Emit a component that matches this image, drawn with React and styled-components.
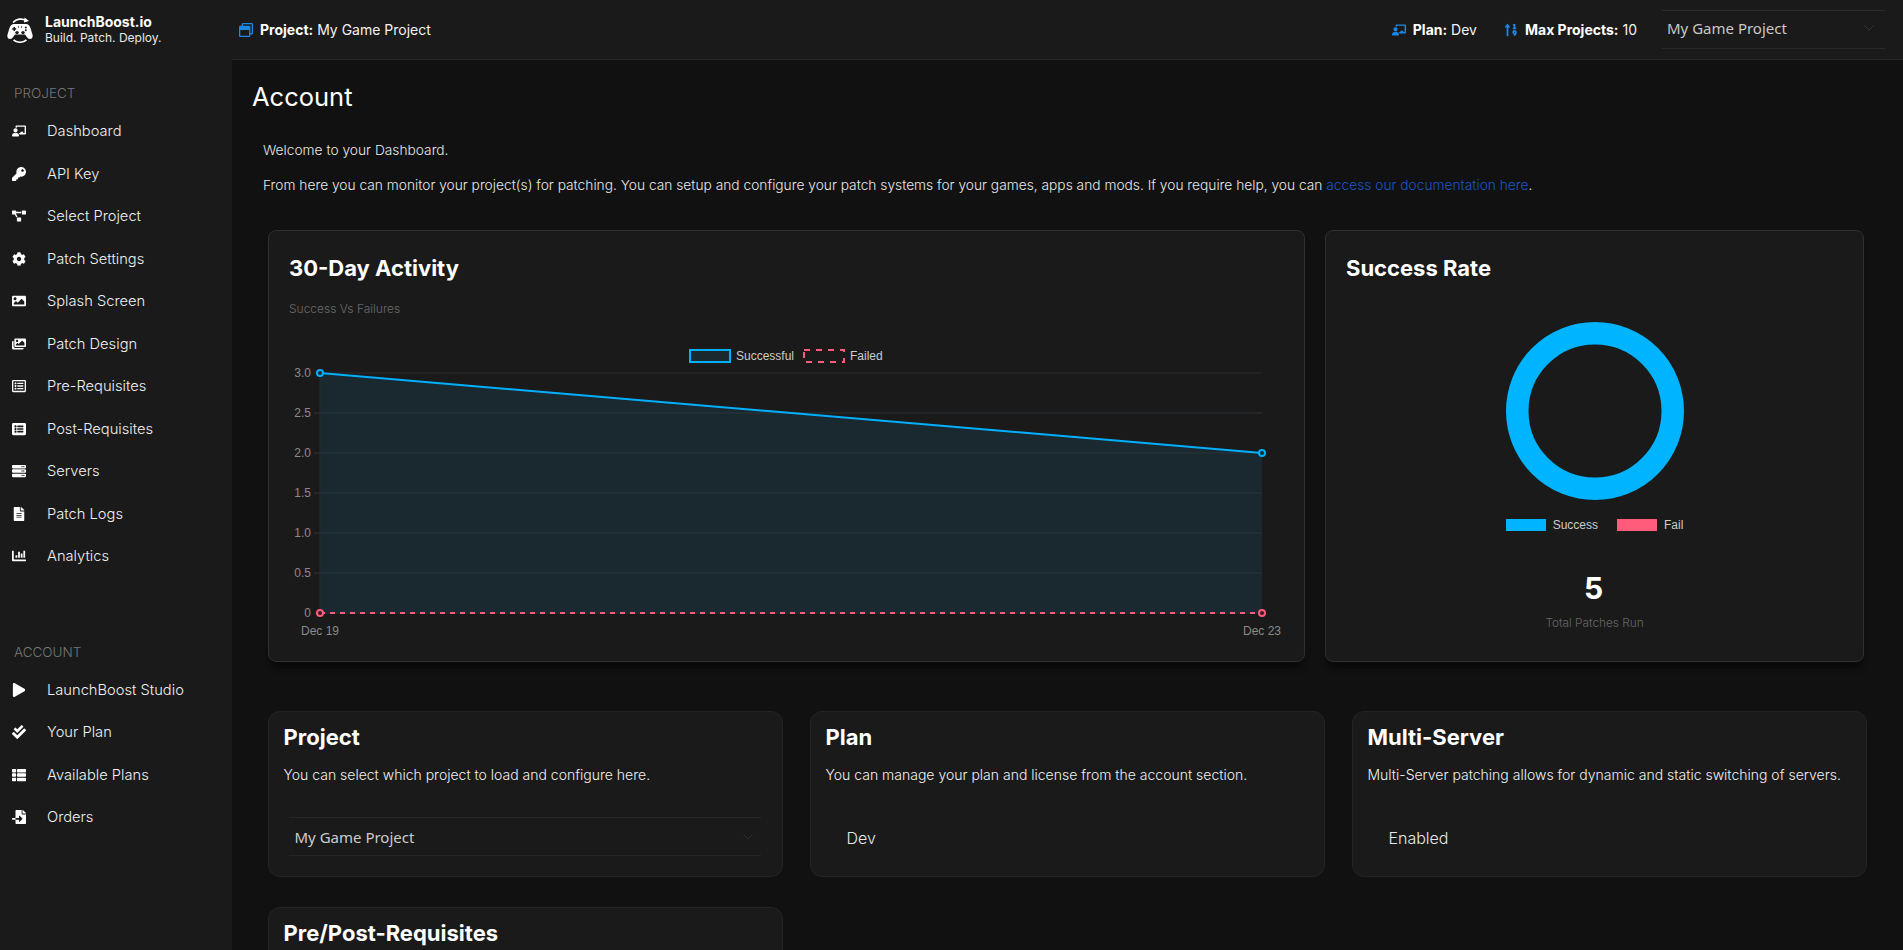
import React from "react";
import styled, { createGlobalStyle } from "styled-components";
import {
  FaChalkboardTeacher, FaKey, FaProjectDiagram, FaCog, FaImage, FaImages, FaListAlt, FaServer,
  FaFileAlt, FaChartBar, FaPlay, FaCheckDouble, FaThList, FaFileImport, FaSortNumericUp, FaRegWindowRestore, FaRegListAlt,
} from "react-icons/fa";

const Global = createGlobalStyle`
  html, body { margin: 0; padding: 0; background: #111; height: 100%; overflow: hidden; }
  * { box-sizing: border-box; }
  body { font-family: Inter, "Liberation Sans", sans-serif; color: #fff; }
`;

const Shell = styled.div`
  display: grid;
  grid-template-columns: 232px 1fr;
  grid-template-rows: 60px 1fr;
  height: 950px;
  overflow: hidden;
`;
const Brand = styled.div`
  background: #1a1a1a;
  display: flex;
  align-items: center;
  gap: 12px;
  padding: 0 0 0 7px;
`;
const BrandText = styled.div`
  display: flex;
  flex-direction: column;
  font-size: 12px;
  line-height: 16px;
  b { font-weight: 700; font-size: 14px; }
  span { color: #e8e8e8; font-weight: 400; }
`;
const Top = styled.header`
  background: #1a1a1a;
  border-bottom: 1px solid #2a2a2a;
  display: flex;
  align-items: center;
  padding: 0 18px 0 7px;
  font-size: 14px;
`;
const TopItem = styled.div`
  display: flex;
  align-items: center;
  gap: 7px;
  margin-left: ${(p) => p.$gap || 0}px;
  color: #f2f2f2;
  font-weight: 400;
  svg { color: #1b87e6; font-size: 14px; }
  b { font-weight: 700; color: #fff; }
`;
const Spacer = styled.div` flex: 1; `;
const TopSelect = styled.div`
  width: 223px;
  height: 39px;
  margin-left: 25px;
  border-top: 1px solid #2a2a2a;
  border-bottom: 1px solid #2a2a2a;
  display: flex;
  align-items: center;
  justify-content: space-between;
  padding: 0 11px 3px 5px;
  font-family: "Noto Sans", sans-serif;
  font-size: 15px;
  color: #c8c8c8;
`;
const Side = styled.aside`
  background: #1a1a1a;
  padding: 23px 0 0 0;
  display: flex;
  flex-direction: column;
`;
const SideHead = styled.div`
  font-size: 13.5px;
  font-weight: 300;
  color: #757575;
  padding-left: 14px;
  line-height: 20px;
  margin-top: ${(p) => p.$top || 0}px;
  margin-bottom: 7px;
`;
const SideItem = styled.div`
  height: 42.5px;
  display: flex;
  align-items: center;
  padding-left: 12px;
  font-size: 14.7px;
  font-weight: 300;
  color: #f0f0f0;
`;
const SideIcon = styled.span`
  width: 35px;
  display: flex;
  svg { font-size: 14px; color: #fff; }
`;
const Main = styled.main`
  background: #111;
  padding: 0 37px 0 21px;
  overflow: hidden;
`;
const PageTitle = styled.h1`
  margin: 22px 0 0 -1px;
  font-size: 25.5px;
  line-height: 30px;
  font-weight: 400;
`;
const Intro = styled.div`
  padding: 29px 0 0 10px;
  font-size: 13.76px;
  font-weight: 300;
  color: #e8e8e8;
  p { margin: 0 0 17px; line-height: 18px; }
  a { color: #1a56c4; }
`;
const TopRow = styled.div`
  display: grid;
  grid-template-columns: 1037px 539px;
  gap: 20px;
  margin: 36px 0 0 15px;
`;
const Card = styled.section`
  background: #1a1a1a;
  border: 1px solid #303030;
  border-radius: 8px;
  height: 432px;
  box-shadow: 0 8px 6px -3px #090909;
  padding: 22px 20px 0;
  position: relative;
`;
const CardTitle = styled.h2`
  margin: 0;
  font-size: 22px;
  line-height: 30px;
  font-weight: 700;
`;
const CardSub = styled.div`
  font-size: 12px;
  font-weight: 300;
  color: #6a6a6a;
  margin-top: 18px;
`;
const ChartWrap = styled.div`
  margin: 24px -20px 0 -20px;
  svg { display: block; }
  text { font-family: "Liberation Sans", Arial, sans-serif; font-size: 12px; }
`;
const DonutWrap = styled.div`
  display: flex;
  justify-content: center;
  margin-top: 38px;
`;
const Legend = styled.div`
  display: flex;
  justify-content: center;
  gap: 19px;
  margin-top: 17px;
  line-height: 14px;
  font-family: "Liberation Sans", Arial, sans-serif;
  font-size: 12px;
  color: #ccc;
`;
const LegendItem = styled.div`
  display: flex;
  align-items: center;
  gap: 7px;
  &::before {
    content: "";
    width: 40px;
    height: 12px;
    background: ${(p) => p.$color};
  }
`;
const Total = styled.div`
  text-align: center;
  font-size: 30px;
  font-weight: 700;
  margin-top: 38px;
  margin-right: 2px;
  line-height: 36px;
`;
const TotalSub = styled.div`
  text-align: center;
  font-size: 11.8px;
  line-height: 15px;
  font-weight: 300;
  color: #666;
  margin-top: 10px;
`;
const InfoGrid = styled.div`
  display: grid;
  grid-template-columns: repeat(3, 515px);
  gap: 30px 27px;
  margin: 49px 0 0 15px;
`;
const InfoCard = styled.section`
  background: #1a1a1a;
  border: 1px solid #242424;
  border-radius: 12px;
  height: 166px;
  padding: 10px 14.5px 0;
`;
const InfoTitle = styled.h3`
  margin: 0;
  font-size: 22px;
  line-height: 30px;
  font-weight: 700;
`;
const InfoText = styled.p`
  margin: 14px 0 0;
  font-size: 14px;
  line-height: 18px;
  font-weight: 300;
  color: #f0f0f0;
`;
const CardSelect = styled.div`
  margin: 33px 7px 0 5px;
  height: 39px;
  border-top: 1px solid #262626;
  border-bottom: 1px solid #262626;
  display: flex;
  align-items: center;
  justify-content: space-between;
  padding: 0 8px 0 6px;
  font-family: "Noto Sans", sans-serif;
  font-size: 15px;
  color: #ccc;
`;
const CardValue = styled.div`
  margin: 44px 0 0 21px;
  font-size: 16px;
  font-weight: 300;
  color: #e8e8e8;
`;

const projectItems = [
  [FaChalkboardTeacher, "Dashboard"], [FaKey, "API Key"], [FaProjectDiagram, "Select Project"],
  [FaCog, "Patch Settings"], [FaImage, "Splash Screen"], [FaImages, "Patch Design"],
  [FaRegListAlt, "Pre-Requisites"], [FaListAlt, "Post-Requisites"], [FaServer, "Servers"],
  [FaFileAlt, "Patch Logs"], [FaChartBar, "Analytics"],
];
const accountItems = [
  [FaPlay, "LaunchBoost Studio"], [FaCheckDouble, "Your Plan"], [FaThList, "Available Plans"], [FaFileImport, "Orders"],
];

function Logo() {
  return (
    <svg width="26" height="26" viewBox="0 0 26 26" fill="none">
      <path d="M6 5.5 A10.5 10.5 0 0 1 19 3.5" stroke="#fff" strokeWidth="1.8" />
      <path d="M17.5 0.5 L22 4 L17 5.5 Z" fill="#fff" />
      <path d="M6.5 23 A11 11 0 0 0 19.5 23" stroke="#fff" strokeWidth="1.8" />
      <path d="M7 7 H19 Q22 7 23.5 11 L25.6 18 Q26 22 23 22 Q21 22 19.5 19.5 L18 17.5 H8 L6.5 19.5 Q5 22 3 22 Q0 22 0.4 18 L2.5 11 Q4 7 7 7 Z" fill="#fff" />
      <path d="M6.5 10 H8 V11.2 H9.2 V12.7 H8 V14 H6.5 V12.7 H5.2 V11.2 H6.5 Z" fill="#1a1a1a" />
      <circle cx="18.8" cy="10.5" r="1" fill="#1a1a1a" />
      <circle cx="18.8" cy="13.3" r="1" fill="#1a1a1a" />
      <circle cx="10" cy="15.6" r="1.7" fill="#1a1a1a" />
      <circle cx="16" cy="15.6" r="1.7" fill="#1a1a1a" />
      <circle cx="11.5" cy="10" r="0.7" fill="#1a1a1a" />
      <circle cx="14.5" cy="10" r="0.7" fill="#1a1a1a" />
    </svg>
  );
}

function Chevron({ color }) {
  return (
    <svg width="10" height="6" viewBox="0 0 10 6" fill="none"><path d="M0.5 0.5 L5 5 L9.5 0.5" stroke={color} /></svg>
  );
}

function ActivityChart() {
  const ox = 51;
  const w = 942;
  const y = (v) => 33 + (3 - v) * 80;
  const ticks = [3, 2.5, 2, 1.5, 1, 0.5, 0];
  return (
    <svg width="1035" height="300" viewBox="0 0 1035 300">
      <path d={`M${ox} ${y(3)} L${ox + w} ${y(2)} V${y(0)} H${ox} Z`} fill="#1a2830" />
      {ticks.map((t) => (
        <g key={t}>
          <line x1={ox - 6} x2={ox + w} y1={y(t)} y2={y(t)} stroke={t === 3 ? "#2a2a2a" : "#2a3338"} />
          <text x={ox - 9} y={y(t) + 4} textAnchor="end" fill="#8a8a8a">{t === 0 ? "0" : t.toFixed(1)}</text>
        </g>
      ))}
      <line x1={ox} x2={ox} y1={y(3)} y2={y(0)} stroke="#2a2a2a" />
      <line x1={ox} y1={y(3)} x2={ox + w} y2={y(2)} stroke="#00b0ff" strokeWidth="2" />
      <line x1={ox} y1={y(0)} x2={ox + w} y2={y(0)} stroke="#ff5c7c" strokeWidth="2" strokeDasharray="5 5" />
      <circle cx={ox} cy={y(3)} r="3" fill="#1a2830" stroke="#00b0ff" strokeWidth="2" />
      <circle cx={ox + w} cy={y(2)} r="3" fill="#1a2830" stroke="#00b0ff" strokeWidth="2" />
      <circle cx={ox} cy={y(0)} r="3" fill="#331a22" stroke="#ff5c7c" strokeWidth="2" />
      <circle cx={ox + w} cy={y(0)} r="3" fill="#331a22" stroke="#ff5c7c" strokeWidth="2" />
      <text x={ox} y={y(0) + 22} textAnchor="middle" fill="#8a8a8a">Dec 19</text>
      <text x={ox + w} y={y(0) + 22} textAnchor="middle" fill="#8a8a8a">Dec 23</text>
      <rect x="421" y="10" width="40" height="12" fill="#1a2830" stroke="#00b0ff" strokeWidth="2" />
      <text x="467" y="20" fill="#ccc">Successful</text>
      <rect x="535" y="10" width="40" height="12" fill="none" stroke="#ff5c7c" strokeWidth="2" strokeDasharray="6 6" />
      <text x="581" y="20" fill="#ccc">Failed</text>
    </svg>
  );
}

function Donut() {
  return (
    <svg width="180" height="180" viewBox="0 0 180 180">
      <circle cx="90" cy="90" r="77.75" fill="none" stroke="#00b4ff" strokeWidth="22.5" />
    </svg>
  );
}

export default function App() {
  return (
    <>
      <Global />
      <Shell>
        <Brand>
          <Logo />
          <BrandText>
            <b>LaunchBoost.io</b>
            <span>Build. Patch. Deploy.</span>
          </BrandText>
        </Brand>
        <Top>
          <TopItem><FaRegWindowRestore /><span><b>Project:</b> My Game Project</span></TopItem>
          <Spacer />
          <TopItem><FaChalkboardTeacher /><span><b>Plan:</b> Dev</span></TopItem>
          <TopItem $gap={27}><FaSortNumericUp /><span><b>Max Projects:</b> 10</span></TopItem>
          <TopSelect>My Game Project<Chevron color="#333" /></TopSelect>
        </Top>
        <Side>
          <SideHead>PROJECT</SideHead>
          {projectItems.map(([I, t]) => (
            <SideItem key={t}><SideIcon><I /></SideIcon>{t}</SideItem>
          ))}
          <SideHead $top={64}>ACCOUNT</SideHead>
          {accountItems.map(([I, t]) => (
            <SideItem key={t}><SideIcon><I /></SideIcon>{t}</SideItem>
          ))}
        </Side>
        <Main>
          <PageTitle>Account</PageTitle>
          <Intro>
            <p>Welcome to your Dashboard.</p>
            <p>From here you can monitor your project(s) for patching. You can setup and configure your patch systems for your games, apps and mods. If you require help, you can <a>access our documentation here</a>.</p>
          </Intro>
          <TopRow>
            <Card>
              <CardTitle>30-Day Activity</CardTitle>
              <CardSub>Success Vs Failures</CardSub>
              <ChartWrap><ActivityChart /></ChartWrap>
            </Card>
            <Card>
              <CardTitle>Success Rate</CardTitle>
              <DonutWrap><Donut /></DonutWrap>
              <Legend>
                <LegendItem $color="#00b4ff">Success</LegendItem>
                <LegendItem $color="#ff5c7c">Fail</LegendItem>
              </Legend>
              <Total>5</Total>
              <TotalSub>Total Patches Run</TotalSub>
            </Card>
          </TopRow>
          <InfoGrid>
            <InfoCard>
              <InfoTitle>Project</InfoTitle>
              <InfoText>You can select which project to load and configure here.</InfoText>
              <CardSelect>My Game Project<Chevron color="#2c2c2c" /></CardSelect>
            </InfoCard>
            <InfoCard>
              <InfoTitle>Plan</InfoTitle>
              <InfoText>You can manage your plan and license from the account section.</InfoText>
              <CardValue>Dev</CardValue>
            </InfoCard>
            <InfoCard>
              <InfoTitle>Multi-Server</InfoTitle>
              <InfoText>Multi-Server patching allows for dynamic and static switching of servers.</InfoText>
              <CardValue>Enabled</CardValue>
            </InfoCard>
            <InfoCard>
              <InfoTitle>Pre/Post-Requisites</InfoTitle>
            </InfoCard>
          </InfoGrid>
        </Main>
      </Shell>
    </>
  );
}
